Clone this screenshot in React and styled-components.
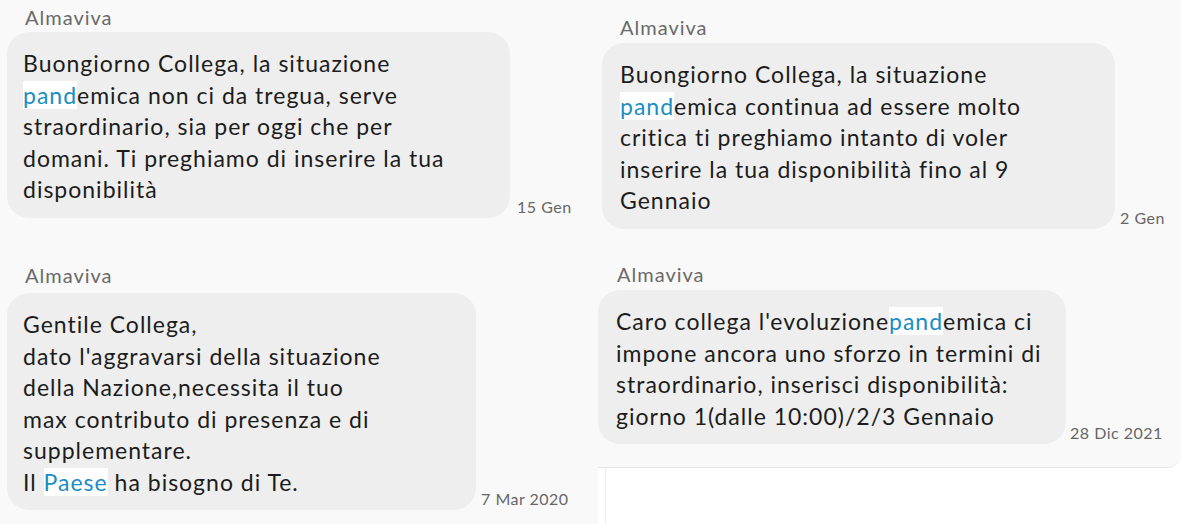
import styled, { createGlobalStyle } from "styled-components"

const GlobalStyle = createGlobalStyle`
  html, body {
    margin: 0;
    padding: 0;
    background: #ffffff;
  }
  body {
    font-family: Lato, "Noto Sans", sans-serif;
    font-variant-ligatures: none;
  }
`

const Page = styled.div`
  width: 1181px;
  height: 524px;
  overflow: hidden;
  display: flex;
  flex-direction: column;
`

const Row = styled.div`
  display: flex;
  height: ${(p) => p.h}px;
`

const Column = styled.div`
  display: flex;
  flex-direction: column;
  flex: 1;
`

const Panel = styled.div`
  box-sizing: border-box;
  background: #f9f9f9;
  width: ${(p) => (p.w ? `${p.w}px` : "auto")};
  flex: ${(p) => (p.w || p.h ? "none" : 1)};
  height: ${(p) => (p.h ? `${p.h}px` : "auto")};
  padding: ${(p) => p.pt}px 0 0 ${(p) => p.pl}px;
  ${(p) =>
    p.cut &&
    `
    border-bottom: 1px solid #e6e6e6;
    border-bottom-right-radius: 14px;
  `}
`

const Filler = styled.div`
  flex: 1;
  background: #ffffff;
  margin-left: 7px;
  border-left: 1px solid #ececec;
`

const Sender = styled.div`
  margin-left: ${(p) => p.ml || 18}px;
  margin-bottom: ${(p) => p.mb}px;
  font-size: 20px;
  line-height: 24px;
  letter-spacing: 1px;
  color: #6a6a6a;
`

const Line = styled.div`
  display: flex;
  align-items: flex-end;
`

const Bubble = styled.div`
  box-sizing: border-box;
  width: ${(p) => p.w}px;
  background: #eeeeee;
  border-radius: 22px;
  padding: 16px 10px 12px ${(p) => p.pl || 16}px;
  font-size: 23px;
  line-height: 31.5px;
  letter-spacing: 1px;
  color: #1c1c1c;
  white-space: nowrap;
`

const Mark = styled.span`
  color: #1a8dc4;
  background: #ffffff;
`

const Time = styled.div`
  margin-left: ${(p) => p.gap}px;
  margin-bottom: 2px;
  font-size: 16px;
  line-height: 19px;
  letter-spacing: 0.5px;
  color: #666666;
  white-space: nowrap;
`

function Message({ mb, ml, w, pl, gap, time, children }) {
  return (
    <>
      <Sender mb={mb} ml={ml}>Almaviva</Sender>
      <Line>
        <Bubble w={w} pl={pl}>{children}</Bubble>
        <Time gap={gap}>{time}</Time>
      </Line>
    </>
  )
}

export default function App() {
  return (
    <Page>
      <GlobalStyle />
      <Row h={250}>
        <Panel w={595} pt={5} pl={7}>
          <Message mb={3} w={503} gap={7} time="15 Gen">
            Buongiorno Collega, la situazione<br />
            <Mark>pand</Mark>emica non ci da tregua, serve<br />
            straordinario, sia per oggi che per<br />
            domani. Ti preghiamo di inserire la tua<br />
            disponibilità
          </Message>
        </Panel>
        <Panel pt={15} pl={7}>
          <Message mb={4} w={513} pl={18} gap={5} time="2 Gen">
            Buongiorno Collega, la situazione<br />
            <Mark>pand</Mark>emica continua ad essere molto<br />
            critica ti preghiamo intanto di voler<br />
            inserire la tua disponibilità fino al 9<br />
            Gennaio
          </Message>
        </Panel>
      </Row>
      <Row h={274}>
        <Panel w={598} pt={13} pl={7}>
          <Message mb={6} w={469} gap={5} time="7 Mar 2020">
            Gentile Collega,<br />
            dato l'aggravarsi della situazione<br />
            della Nazione,necessita il tuo<br />
            max contributo di presenza e di<br />
            supplementare.<br />
            Il <Mark>Paese</Mark> ha bisogno di Te.
          </Message>
        </Panel>
        <Column>
          <Panel h={218} pt={12} pl={0} cut>
            <Message mb={4} ml={19} w={468} pl={18} gap={4} time="28 Dic 2021">
              Caro collega l'evoluzione<Mark>pand</Mark>emica ci<br />
              impone ancora uno sforzo in termini di<br />
              straordinario, inserisci disponibilità:<br />
              giorno 1(dalle 10:00)/2/3 Gennaio
            </Message>
          </Panel>
          <Filler />
        </Column>
      </Row>
    </Page>
  )
}
